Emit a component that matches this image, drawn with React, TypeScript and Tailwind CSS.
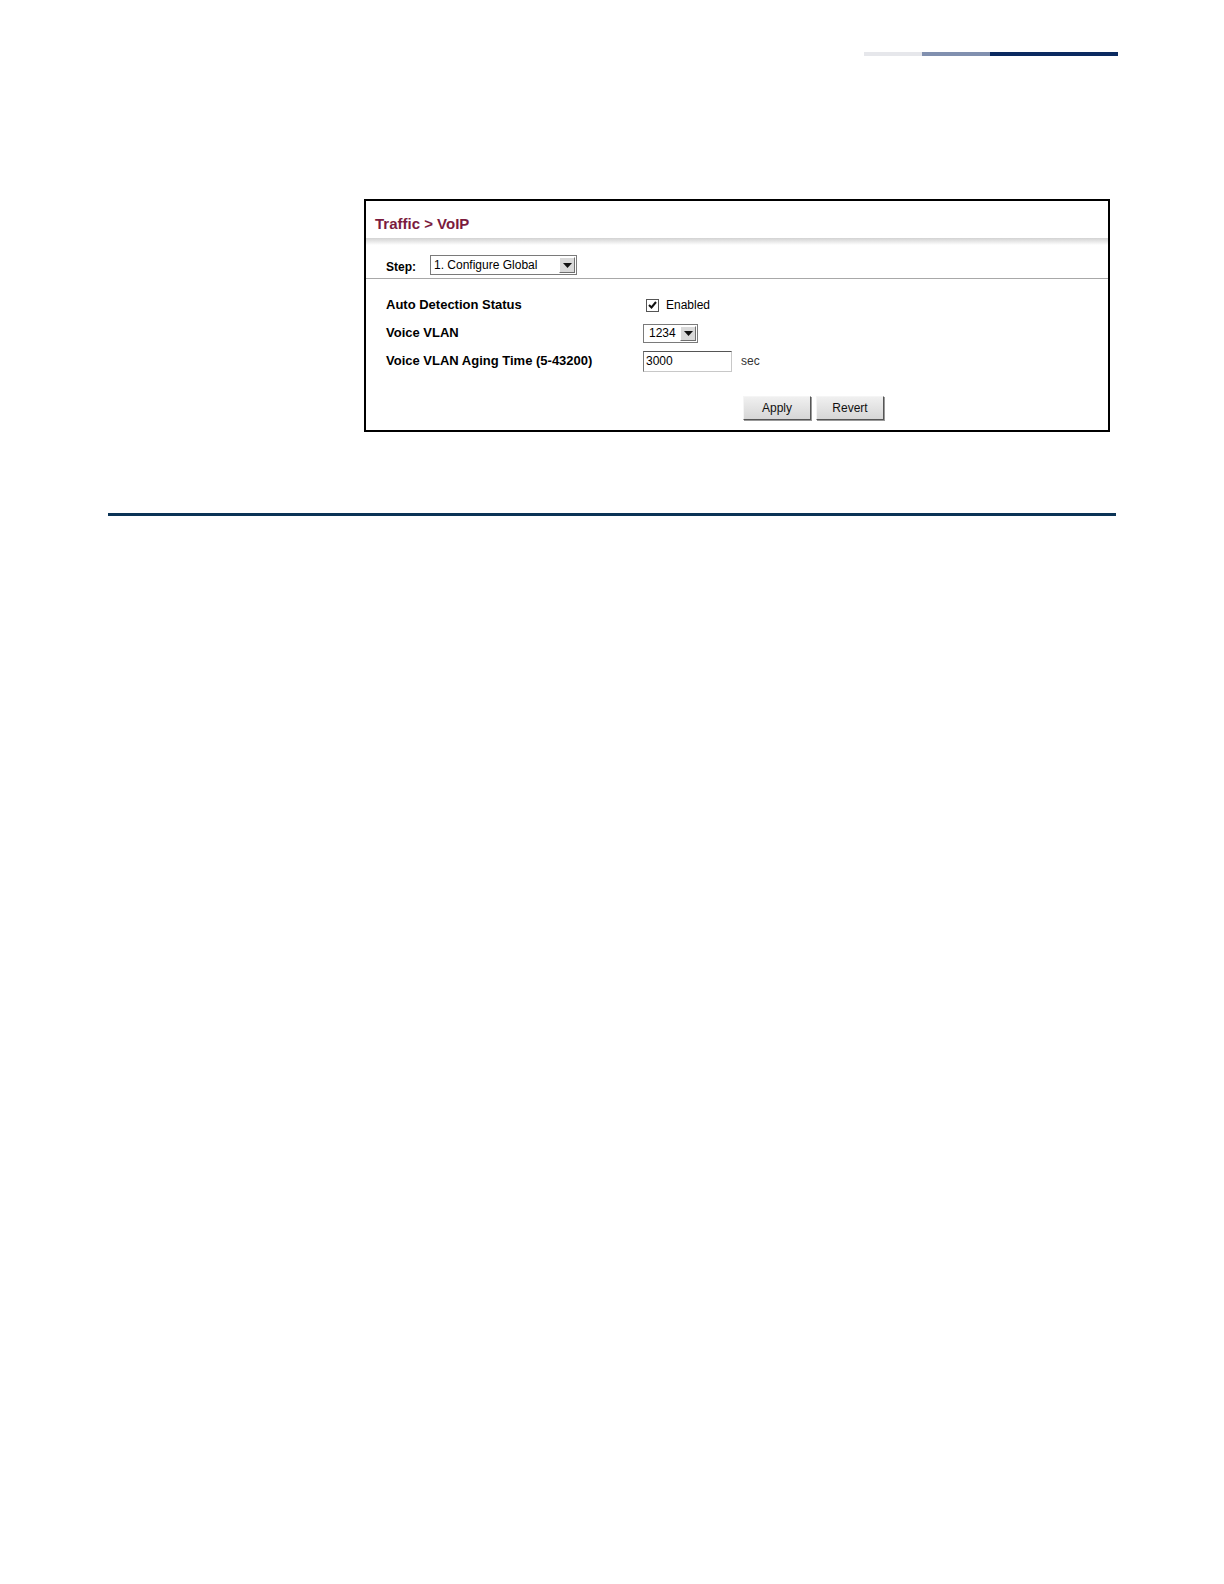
function ArrowButton({ className = "" }: { className?: string }) {
  return (
    <span
      className={`flex items-center justify-center bg-[#d9d9d9] border-t border-l border-t-white border-l-white border-b border-r border-b-[#6f6f6f] border-r-[#6f6f6f] ${className}`}
    >
      <svg width="9" height="5" viewBox="0 0 9 5">
        <polygon points="0,0 9,0 4.5,5" fill="#111" />
      </svg>
    </span>
  );
}

function FormButton({ label }: { label: string }) {
  return (
    <button
      type="button"
      className="h-[24px] w-[68px] bg-gradient-to-b from-[#f0f0f0] to-[#d6d6d6] border border-t-[#f5f5f5] border-l-[#f5f5f5] border-b-[#555] border-r-[#555] shadow-[1px_1px_0_#999] text-[12px] text-[#111] leading-none"
    >
      {label}
    </button>
  );
}

export default function App() {
  return (
    <div className="w-[1224px] min-h-[1584px] bg-white font-['Liberation_Sans',Arial,sans-serif] text-black">
      {/* header rule */}
      <div className="flex justify-end pt-[52px] pr-[106px]">
        <div className="h-[4px] w-[58px] bg-[#e6e7eb]" />
        <div className="h-[4px] w-[68px] bg-[#8190af]" />
        <div className="h-[4px] w-[128px] bg-[#0b2a60]" />
      </div>

      {/* screenshot panel */}
      <div className="mt-[143px] ml-[364px] w-[746px] h-[233px] border-2 border-black">
        <div className="pt-[14px] pl-[9px] text-[15px] leading-[18px] font-bold text-[#7b1b3e]">
          Traffic &gt; VoIP
        </div>
        <div className="mt-[5px] h-[7px] bg-gradient-to-b from-[#d2d2d2] to-white" />

        {/* step row */}
        <div className="flex items-center pt-[9px] pb-[2px] pl-[20px]">
          <span className="mt-[4px] w-[44px] text-[12px] font-bold">Step:</span>
          <div className="flex items-center h-[20px] w-[147px] border border-[#7a7a7a] bg-white">
            <span className="flex-1 pl-[3px] text-[12px] leading-none">1. Configure Global</span>
            <ArrowButton className="h-[16px] w-[16px] mr-[1px]" />
          </div>
        </div>
        <div className="h-px bg-[#a8a8a8]" />

        {/* fields */}
        <div className="pt-[12px] pl-[20px]">
          <div className="flex items-center h-[28px]">
            <span className="w-[257px] text-[13px] font-bold">Auto Detection Status</span>
            <span className="ml-[3px] flex items-center justify-center h-[13px] w-[13px] border border-[#555] bg-white">
              <svg width="9" height="8" viewBox="0 0 9 8">
                <path d="M1 4 L3.5 6.5 L8 1" stroke="#111" strokeWidth="2" fill="none" />
              </svg>
            </span>
            <span className="ml-[7px] text-[12px]">Enabled</span>
          </div>
          <div className="flex items-center h-[28px]">
            <span className="w-[257px] text-[13px] font-bold">Voice VLAN</span>
            <div className="flex items-center h-[19px] w-[55px] border border-[#7a7a7a] bg-white">
              <span className="flex-1 pl-[5px] text-[12px] leading-none">1234</span>
              <ArrowButton className="h-[15px] w-[16px] mr-[1px]" />
            </div>
          </div>
          <div className="flex items-center h-[28px]">
            <span className="w-[257px] text-[13px] font-bold">Voice VLAN Aging Time (5-43200)</span>
            <div className="flex items-center h-[21px] w-[89px] border border-[#c8c8c8] border-t-[#555] border-l-[#777] bg-white">
              <span className="pl-[2px] text-[12px] leading-none">3000</span>
            </div>
            <span className="ml-[9px] text-[12px] text-[#333]">sec</span>
          </div>
          <div className="flex gap-[5px] pl-[357px] pt-[21px]">
            <FormButton label="Apply" />
            <FormButton label="Revert" />
          </div>
        </div>
      </div>

      {/* footer rule */}
      <div className="mt-[81px] mx-[108px] h-[3px] bg-[#0b3356]" />
    </div>
  );
}
